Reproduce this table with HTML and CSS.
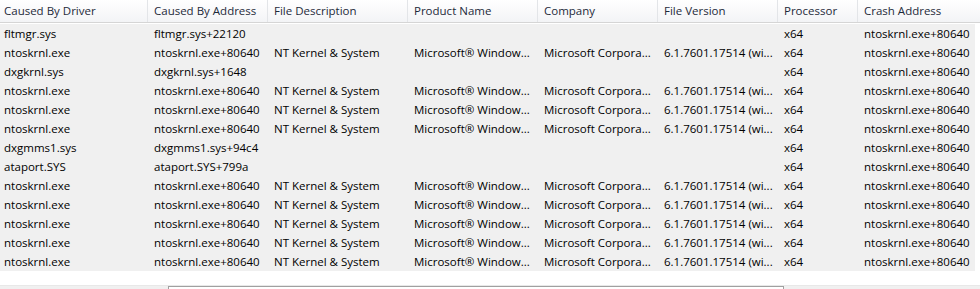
FILE: index.html
```html
<!DOCTYPE html>
<html lang="en">
<head>
    <meta charset="UTF-8">
    <title>Crash List</title>
    <link rel="stylesheet" href="styles.css">
</head>
<body>
    <div class="list">
        <div class="row header">
            <div class="cell">Caused By Driver</div>
            <div class="cell">Caused By Address</div>
            <div class="cell">File Description</div>
            <div class="cell">Product Name</div>
            <div class="cell">Company</div>
            <div class="cell">File Version</div>
            <div class="cell">Processor</div>
            <div class="cell">Crash Address</div>
        </div>
        <div class="body" id="rows"></div>
    </div>
    <div class="status">
        <div class="panel"></div>
    </div>

    <script>
        const kernel = ['NT Kernel & System', 'Microsoft® Window...', 'Microsoft Corpora...', '6.1.7601.17514 (wi...'];
        const blank = ['', '', '', ''];
        const rows = [
            ['fltmgr.sys', 'fltmgr.sys+22120', blank],
            ['ntoskrnl.exe', 'ntoskrnl.exe+80640', kernel],
            ['dxgkrnl.sys', 'dxgkrnl.sys+1648', blank],
            ['ntoskrnl.exe', 'ntoskrnl.exe+80640', kernel],
            ['ntoskrnl.exe', 'ntoskrnl.exe+80640', kernel],
            ['ntoskrnl.exe', 'ntoskrnl.exe+80640', kernel],
            ['dxgmms1.sys', 'dxgmms1.sys+94c4', blank],
            ['ataport.SYS', 'ataport.SYS+799a', blank],
            ['ntoskrnl.exe', 'ntoskrnl.exe+80640', kernel],
            ['ntoskrnl.exe', 'ntoskrnl.exe+80640', kernel],
            ['ntoskrnl.exe', 'ntoskrnl.exe+80640', kernel],
            ['ntoskrnl.exe', 'ntoskrnl.exe+80640', kernel],
            ['ntoskrnl.exe', 'ntoskrnl.exe+80640', kernel]
        ];
        const body = document.getElementById('rows');

        rows.forEach(function(r) {
            const values = [r[0], r[1]].concat(r[2], ['x64', 'ntoskrnl.exe+80640']);
            const row = document.createElement('div');
            row.className = 'row';
            values.forEach(function(v) {
                const cell = document.createElement('div');
                cell.className = 'cell';
                cell.textContent = v;
                row.appendChild(cell);
            });
            body.appendChild(row);
        });
    </script>
</body>
</html>
```

FILE: styles.css
```css
body {
    margin: 0;
    font-family: "Open Sans", "Liberation Sans", sans-serif;
    font-size: 11.5px;
    color: #000;
    background: #fff;
    height: 289px;
    overflow: hidden;
    display: flex;
    flex-direction: column;
}

.list {
    flex: 1;
}

.row {
    display: grid;
    grid-template-columns: 148px 120px 140px 130px 120px 120px 80px 117px;
    height: 19px;
    align-items: center;
}

.cell {
    padding-left: 6px;
    white-space: nowrap;
    overflow: hidden;
}

.cell:first-child {
    padding-left: 4px;
}

.header {
    height: 22px;
    background: linear-gradient(#ffffff, #f3f4f6);
    border-bottom: 1px solid #d5d5d5;
    color: #1e2a3a;
    margin-bottom: 1px;
    grid-template-columns: 148px 120px 140px 130px 120px 120px 80px 1fr;
}

.header .cell {
    height: 22px;
    line-height: 22px;
    border-right: 1px solid #e3e5e8;
    padding-left: 6px;
}

.header .cell:first-child {
    padding-left: 4px;
}

.header .cell:last-child {
    border-right: none;
}

.body {
    width: 975px;
    background: #f0f0f0;
}

.body .row .cell {
    line-height: 19px;
}

.status {
    height: 3px;
    background: #f0f0f0;
    border-top: 1px solid #e8e8e8;
    padding-left: 168px;
}

.panel {
    width: 614px;
    height: 3px;
    background: #fff;
    border-top: 1px solid #a0a0a0;
    border-left: 1px solid #a0a0a0;
    border-right: 1px solid #a0a0a0;
}
```
